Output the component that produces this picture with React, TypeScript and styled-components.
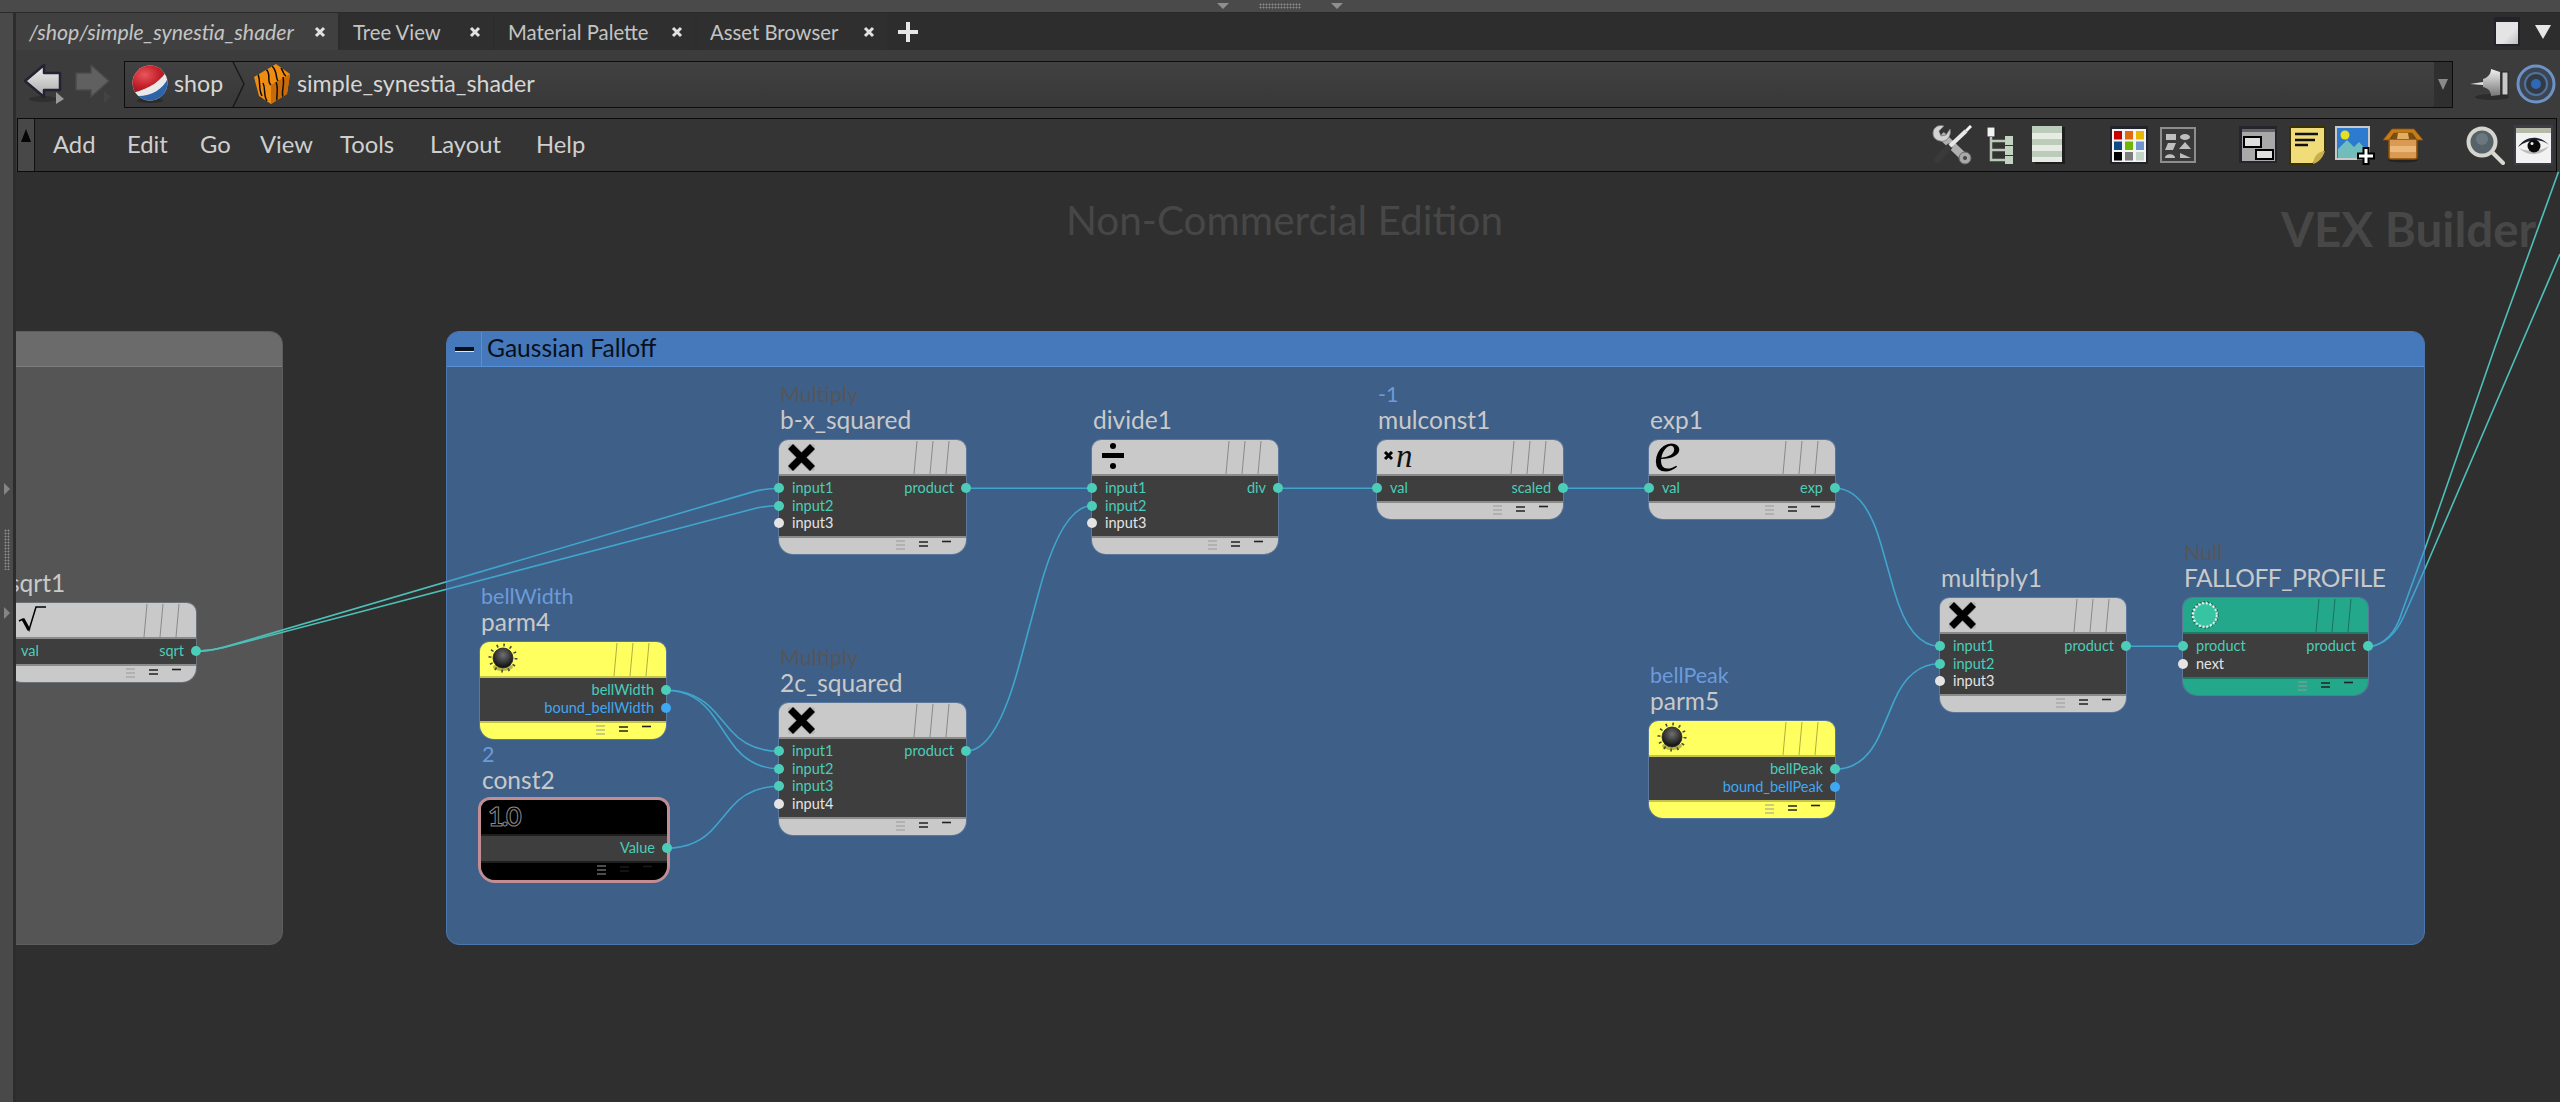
import React from 'react'
import styled, { createGlobalStyle } from 'styled-components'

const UI_FONT = `Lato, 'Noto Sans', sans-serif`
const CANVAS_X = 16
const CANVAS_Y = 172
const ROW_H = 17.5

const GlobalStyle = createGlobalStyle`
  html, body {
    margin: 0;
    padding: 0;
    height: 100%;
    background: #2f2f2f;
    overflow: hidden;
  }
  #root {
    height: 100%;
  }
`

const Shell = styled.div`
  display: flex;
  flex-direction: column;
  width: 2560px;
  height: 1102px;
  font-family: ${UI_FONT};
  background: #3a3a3a;
`

const TopStrip = styled.div`
  flex: none;
  height: 12px;
  display: flex;
  align-items: center;
  justify-content: center;
  gap: 30px;
  background: #4a4a4a;
  border-bottom: 1px solid #2a2a2a;
`

const DownTriangle = styled.div`
  width: 0;
  height: 0;
  border-left: 6px solid transparent;
  border-right: 6px solid transparent;
  border-top: 6px solid #8f8f8f;
`

const GripDots = styled.div<{ $w: number; $h: number; $gap?: number }>`
  width: ${p => p.$w}px;
  height: ${p => p.$h}px;
  margin-top: ${p => p.$gap ?? 0}px;
  background-image: radial-gradient(circle, #8a8a8a 0.9px, transparent 1.1px);
  background-size: 3px 3px;
`

const Body = styled.div`
  flex: 1;
  display: flex;
  min-height: 0;
`

const Gutter = styled.div`
  flex: none;
  width: 13px;
  display: flex;
  flex-direction: column;
  align-items: center;
  padding-top: 470px;
  background: #494949;
  border-right: 3px solid #2c2c2c;
`

const SideTriangle = styled.div<{ $gap: number }>`
  width: 0;
  height: 0;
  margin-top: ${p => p.$gap}px;
  border-top: 6px solid transparent;
  border-bottom: 6px solid transparent;
  border-left: 6px solid #858585;
`

const Main = styled.div`
  flex: 1;
  min-width: 0;
  display: flex;
  flex-direction: column;
`

const TabBar = styled.div`
  flex: none;
  height: 37px;
  display: flex;
  align-items: stretch;
  gap: 2px;
  background: #2d2d2d;
`

const Tab = styled.div<{ $w: number; $active?: boolean }>`
  width: ${p => p.$w}px;
  display: flex;
  align-items: center;
  justify-content: space-between;
  padding: 0 12px 0 13px;
  box-sizing: border-box;
  background: ${p => (p.$active ? '#404040' : '#2f2f2f')};
  color: #c4c4c4;
  font-size: ${p => (p.$active ? 21.3 : 20.3)}px;
  font-style: ${p => (p.$active ? 'italic' : 'normal')};
  white-space: nowrap;
`

const NewTab = styled.div`
  width: 38px;
  display: flex;
  align-items: center;
  justify-content: center;
`

const TabSpacer = styled.div`
  flex: 1;
`

const CornerTools = styled.div`
  display: flex;
  align-items: center;
  gap: 15px;
  padding-right: 9px;
`

const PaneSquare = styled.div`
  width: 22px;
  height: 22px;
  border: 2px solid #23232b;
  border-top-width: 5px;
  background: linear-gradient(135deg, #e4e4e4 60%, #bdbdbd);
`

const CornerTriangle = styled.div`
  width: 0;
  height: 0;
  border-left: 8px solid transparent;
  border-right: 8px solid transparent;
  border-top: 14px solid #e6e6e6;
`

const PathRow = styled.div`
  flex: none;
  height: 68px;
  display: flex;
  align-items: center;
  background: #3c3c3c;
  box-sizing: border-box;
  padding: 0 4px 0 6px;
`

const NavSlot = styled.div<{ $w: number; $gap?: number }>`
  flex: none;
  width: ${p => p.$w}px;
  margin-left: ${p => p.$gap ?? 0}px;
  display: flex;
  align-items: center;
  justify-content: center;
`

const PathField = styled.div`
  flex: 1;
  height: 47px;
  margin-left: 12px;
  display: flex;
  align-items: stretch;
  box-sizing: border-box;
  border: 1px solid #0d0d0d;
  background: linear-gradient(#414141, #383838);
  color: #d6d6d6;
  font-size: 23.2px;
`

const Crumb = styled.div<{ $w?: number }>`
  display: flex;
  align-items: center;
  gap: 6px;
  padding-left: 7px;
  width: ${p => (p.$w ? `${p.$w}px` : 'auto')};
  box-sizing: border-box;
`

const CrumbText = styled.span`
  margin-top: -3px;
`

const CrumbChevron = styled.svg`
  flex: none;
  margin-left: -7px;
`

const PathDrop = styled.div`
  margin-left: auto;
  width: 18px;
  display: flex;
  align-items: center;
  justify-content: center;
  background: #2f2f2f;
`

const PathDropArrow = styled.div`
  width: 0;
  height: 0;
  border-left: 5px solid transparent;
  border-right: 5px solid transparent;
  border-top: 11px solid #8a8a8a;
`

const Toolbar = styled.div`
  flex: none;
  height: 54px;
  margin: 0 3px 0 1px;
  display: flex;
  align-items: center;
  box-sizing: border-box;
  border: 1px solid #0b0b0b;
  background: #343434;
  padding-right: 3px;
`

const Handle = styled.div`
  flex: none;
  align-self: stretch;
  width: 17px;
  display: flex;
  justify-content: center;
  padding-top: 10px;
  box-sizing: border-box;
  background: #484848;
  border-right: 1px solid #111;
`

const HandleArrow = styled.div`
  width: 0;
  height: 0;
  border-left: 5px solid transparent;
  border-right: 5px solid transparent;
  border-bottom: 13px solid #050505;
`

const Menu = styled.div`
  display: flex;
  padding: 0 0 2px 18px;
  color: #cfcfcf;
  font-size: 23.8px;
`

const MenuItem = styled.span<{ $w: number }>`
  width: ${p => p.$w}px;
`

const ToolSlot = styled.div<{ $w: number; $gap: number; $auto?: boolean }>`
  flex: none;
  width: ${p => p.$w}px;
  height: 40px;
  margin-left: ${p => (p.$auto ? 'auto' : `${p.$gap}px`)};
  display: flex;
  align-items: center;
  justify-content: center;
`

const Canvas = styled.div`
  flex: 1;
  position: relative;
  overflow: hidden;
  background: #2f2f2f;
`

const Watermark = styled.div<{ $x: number; $y: number; $size: number; $bold?: boolean }>`
  position: absolute;
  left: ${p => p.$x - CANVAS_X}px;
  top: ${p => p.$y - CANVAS_Y}px;
  font-size: ${p => p.$size}px;
  font-weight: ${p => (p.$bold ? 700 : 400)};
  line-height: 1;
  color: #474747;
  white-space: nowrap;
`

const Group = styled.div<{ $x: number; $y: number; $w: number; $h: number; $bg: string; $line: string }>`
  position: absolute;
  left: ${p => p.$x - CANVAS_X}px;
  top: ${p => p.$y - CANVAS_Y}px;
  width: ${p => p.$w}px;
  height: ${p => p.$h}px;
  display: flex;
  flex-direction: column;
  box-sizing: border-box;
  border-radius: 13px;
  overflow: hidden;
  background: ${p => p.$bg};
  border: 1px solid ${p => p.$line};
`

const GroupHeader = styled.div<{ $bg: string; $line: string }>`
  flex: none;
  height: 35px;
  display: flex;
  align-items: stretch;
  box-sizing: border-box;
  background: ${p => p.$bg};
  border-bottom: 1px solid ${p => p.$line};
`

const Collapse = styled.div`
  flex: none;
  width: 35px;
  display: flex;
  align-items: center;
  justify-content: center;
  box-sizing: border-box;
  border-right: 1px solid #5b8ecb;
`

const CollapseBar = styled.div`
  width: 19px;
  height: 4px;
  background: #0a0f18;
  border-bottom: 1px solid #dfe6ef;
`

const GroupTitle = styled.div`
  padding: 0 0 3px 5px;
  display: flex;
  align-items: center;
  color: #07101d;
  font-size: 24.6px;
`

const WireLayer = styled.svg`
  position: absolute;
  left: 0;
  top: 0;
`

const toneFill = { gray: '#c9c9c9', yellow: '#ffff60', green: '#23a88b', black: '#000000' }
const toneLine = { gray: '#8b8b8b', yellow: '#c4c44c', green: '#1c7c68', black: '#1e1e1e' }
type Tone = keyof typeof toneFill

const NodeBox = styled.div<{ $x: number; $y: number; $w: number; $tone: Tone }>`
  position: absolute;
  left: ${p => p.$x - CANVAS_X}px;
  top: ${p => p.$y - CANVAS_Y}px;
  width: ${p => p.$w}px;
  display: flex;
  flex-direction: column;
  border-radius: 9px 9px 14px 14px;
  box-shadow: ${p => (p.$tone === 'black' ? '0 0 0 3px #c28e93' : '0 0 0 1px rgba(150, 165, 185, 0.35)')};
`

const Caption = styled.div`
  position: absolute;
  left: 1px;
  bottom: 100%;
  margin-bottom: 7px;
  display: flex;
  flex-direction: column;
  white-space: nowrap;
`

const SubLabel = styled.div<{ $param?: boolean }>`
  font-size: 21.5px;
  line-height: 25px;
  color: ${p => (p.$param ? '#6c9bdb' : '#55565a')};
`

const NameLabel = styled.div<{ $tight?: boolean }>`
  font-size: 24.5px;
  line-height: 26px;
  letter-spacing: ${p => (p.$tight ? '-0.5px' : '0')};
  color: #c9c9c9;
`

const NodeHeader = styled.div<{ $tone: Tone }>`
  flex: none;
  height: 36px;
  position: relative;
  display: flex;
  align-items: center;
  padding-left: 9px;
  box-sizing: border-box;
  border-radius: 9px 9px 0 0;
  background: ${p => toneFill[p.$tone]};
  border-bottom: 2px solid ${p => toneLine[p.$tone]};
`

const Slashes = styled.svg`
  position: absolute;
  right: 11px;
  top: 1px;
`

const NodeBody = styled.div`
  flex: none;
  display: flex;
  flex-direction: column;
  padding: 3.5px 0 4px;
  background: #3e3e3e;
`

const PortRow = styled.div`
  position: relative;
  height: ${ROW_H}px;
  display: flex;
  justify-content: space-between;
  align-items: center;
  padding: 0 12px 0 13px;
`

const portColor = { teal: '#4ccdb9', white: '#e4e4e4', blue: '#3fa8f2' }
type PortTone = keyof typeof portColor

const PortLabel = styled.span<{ $tone: PortTone }>`
  font-size: 14.5px;
  line-height: 1;
  color: ${p => portColor[p.$tone]};
  white-space: nowrap;
`

const PortDot = styled.span<{ $tone: PortTone; $side: 'left' | 'right' }>`
  position: absolute;
  ${p => p.$side}: -5px;
  top: 50%;
  width: 10px;
  height: 10px;
  margin-top: -5px;
  border-radius: 50%;
  background: ${p => portColor[p.$tone]};
`

const NodeFooter = styled.div<{ $tone: Tone; $h: number }>`
  flex: none;
  height: ${p => p.$h}px;
  position: relative;
  box-sizing: border-box;
  border-radius: 0 0 14px 14px;
  background: ${p => toneFill[p.$tone]};
  border-top: 2px solid ${p => toneLine[p.$tone]};
`

const FooterMarks = styled.svg`
  position: absolute;
  right: 14px;
  top: 2px;
`

const EGlyph = styled.span`
  font-family: 'Liberation Serif', serif;
  font-style: italic;
  font-size: 60px;
  line-height: 33px;
  height: 33px;
  margin-left: -4px;
  color: #000;
  position: relative;
  top: -6px;
`

const ScaleIcon = styled.div`
  display: flex;
  align-items: center;
  gap: 2px;
  margin-left: -3px;
  margin-top: -3px;
`

const ScaleLetter = styled.span`
  font-family: 'Liberation Serif', serif;
  font-style: italic;
  font-size: 33px;
  line-height: 30px;
  color: #111;
`

const ConstGlyph = styled.span`
  font-size: 27px;
  font-weight: 700;
  letter-spacing: -2px;
  color: #000;
  -webkit-text-stroke: 1px #8a8a8a;
  margin-left: -2px;
  margin-top: -4px;
`

const IconShift = styled.div<{ $x?: number; $y?: number }>`
  display: flex;
  margin-left: ${p => p.$x ?? 0}px;
  margin-top: ${p => p.$y ?? 0}px;
`

/* ---------- icons ---------- */

const CrossIcon = () => (
  <svg width="27" height="27" viewBox="0 0 27 27">
    <path d="M4 4 L23 23 M23 4 L4 23" stroke="#b5b5b5" strokeWidth="9" strokeLinecap="round" />
    <path d="M5 5 L22 22 M22 5 L5 22" stroke="#000" strokeWidth="7" strokeLinecap="square" />
  </svg>
)

const DivideIcon = () => (
  <IconShift $y={-2}>
    <svg width="26" height="30" viewBox="0 0 26 30">
      <rect x="1" y="12" width="22" height="5" fill="#000" />
      <circle cx="12" cy="5" r="3" fill="#000" />
      <circle cx="12" cy="25" r="3" fill="#000" />
    </svg>
  </IconShift>
)

const RootIcon = () => (
  <IconShift $y={-2}>
    <svg width="30" height="28" viewBox="0 0 30 28">
      <path d="M2 16 L6 14 L12 25 L19 2 L29 2" fill="none" stroke="#000" strokeWidth="1.5" />
      <path d="M6 14 L12 25" stroke="#000" strokeWidth="3.2" />
    </svg>
  </IconShift>
)

const KnobIcon = () => (
  <IconShift $x={-1} $y={-2}>
    <svg width="30" height="30" viewBox="0 0 30 30">
      <defs>
        <radialGradient id="knobFill" cx="50%" cy="35%" r="65%">
          <stop offset="0%" stopColor="#707070" />
          <stop offset="70%" stopColor="#2a2a2a" />
          <stop offset="100%" stopColor="#0c0c0c" />
        </radialGradient>
      </defs>
      <ellipse cx="15" cy="24" rx="10" ry="4" fill="#b9b942" />
      <circle cx="15" cy="15" r="13" fill="none" stroke="#4a4a3a" strokeWidth="3" strokeDasharray="1.6 5.2" />
      <circle cx="15" cy="15" r="10" fill="url(#knobFill)" stroke="#222" strokeWidth="0.8" />
    </svg>
  </IconShift>
)

const NullIcon = () => (
  <IconShift $x={-1}>
    <svg width="28" height="28" viewBox="0 0 28 28">
      <circle cx="14" cy="14" r="12" fill="#36c4a2" stroke="#e3ede9" strokeWidth="2.5" strokeDasharray="2.2 1.6" />
      <circle cx="14" cy="14" r="13.2" fill="none" stroke="#11332b" strokeWidth="0.8" strokeDasharray="2 2" />
    </svg>
  </IconShift>
)

const MiniCross = () => (
  <svg width="11" height="11" viewBox="0 0 11 11">
    <path d="M2 2 L9 9 M9 2 L2 9" stroke="#000" strokeWidth="3" />
  </svg>
)

const CloseX = () => (
  <svg width="12" height="12" viewBox="0 0 12 12">
    <path d="M2 2 L10 10 M10 2 L2 10" stroke="#e2e2e2" strokeWidth="3" />
  </svg>
)

const PlusIcon = () => (
  <svg width="20" height="20" viewBox="0 0 20 20">
    <path d="M10 0 V20 M0 10 H20" stroke="#e6e6e6" strokeWidth="4" />
  </svg>
)

const BackArrow = () => (
  <svg width="42" height="42" viewBox="0 0 42 42">
    <defs>
      <linearGradient id="backFill" x1="0" y1="0" x2="0" y2="1">
        <stop offset="0%" stopColor="#f2f2f2" />
        <stop offset="100%" stopColor="#a9a9a9" />
      </linearGradient>
    </defs>
    <ellipse cx="20" cy="36" rx="14" ry="3" fill="#2f2f2f" />
    <path d="M2 18 L21 2 V10 H37 V27 H21 V34 Z" fill="url(#backFill)" stroke="#232333" strokeWidth="2.5" strokeLinejoin="round" />
    <path d="M33 29 L41 36 L33 41 Z" fill="#9a9a9a" />
  </svg>
)

const ForwardArrow = () => (
  <svg width="38" height="42" viewBox="0 0 38 42">
    <path d="M35 18 L17 2 V10 H2 V27 H17 V34 Z" fill="#606060" stroke="#4a4a4a" strokeWidth="1.5" strokeLinejoin="round" />
    <path d="M30 28 L37 34 L30 40 Z" fill="#434343" />
  </svg>
)

const PepsiIcon = () => (
  <svg width="36" height="38" viewBox="0 0 36 38">
    <defs>
      <clipPath id="pepsiClip">
        <circle cx="18" cy="18" r="17.5" />
      </clipPath>
      <radialGradient id="pepsiRed" cx="35%" cy="35%" r="70%">
        <stop offset="0%" stopColor="#e8565b" />
        <stop offset="60%" stopColor="#c41f2a" />
        <stop offset="100%" stopColor="#8f1a20" />
      </radialGradient>
    </defs>
    <ellipse cx="18" cy="35.5" rx="13" ry="2.5" fill="#2a2a2a" />
    <g clipPath="url(#pepsiClip)">
      <rect width="36" height="36" fill="#e9e9e9" />
      <path d="M0 0 H36 V4 C30 15 18 24 0 28 Z" fill="url(#pepsiRed)" />
      <path d="M36 13 C31 24 20 31 6 31 V36 H36 Z" fill="#2d63a8" />
    </g>
  </svg>
)

const TigerIcon = () => (
  <svg width="38" height="42" viewBox="0 0 38 42">
    <defs>
      <clipPath id="tigerClip">
        <path d="M1 14 L23 1 L37 11 L34 31 L18 41 L6 33 Z" />
      </clipPath>
    </defs>
    <path d="M1 14 L23 1 L37 11 L34 31 L18 41 L6 33 Z" fill="#f08c10" />
    <path d="M18 22 L37 11 L34 31 L18 41 Z" fill="#c96a08" />
    <g clipPath="url(#tigerClip)" fill="none" stroke="#0c0c0c" strokeWidth="1.5">
      <path d="M5 11 C8 19 5 25 9 33" />
      <path d="M10 20 C13 26 10 32 14 38" />
      <path d="M13 6 C19 12 13 18 18 22" />
      <path d="M19 3 C25 9 22 14 25 18" />
      <path d="M23 19 C26 26 23 32 24 38" />
      <path d="M30 14 C32 22 28 28 30 34" />
      <path d="M28 5 C31 9 30 12 33 13" />
    </g>
  </svg>
)

const PinIcon = () => (
  <svg width="40" height="38" viewBox="0 0 40 38">
    <defs>
      <linearGradient id="pinFill" x1="0" y1="0" x2="0" y2="1">
        <stop offset="0%" stopColor="#f0f0f0" />
        <stop offset="100%" stopColor="#777" />
      </linearGradient>
    </defs>
    <ellipse cx="22" cy="32" rx="17" ry="3" fill="#2c2c2c" />
    <path d="M0 19 L13 17 V20 Z" fill="#e5e5e5" />
    <path d="M13 14 C19 12 21 8 21 4 L30 7 V30 L21 31 C21 26 18 23 13 22 Z" fill="url(#pinFill)" />
    <rect x="32" y="7" width="6" height="23" fill="#c8c8c8" stroke="#222" strokeWidth="1" />
  </svg>
)

const TargetIcon = () => (
  <svg width="40" height="40" viewBox="0 0 40 40">
    <circle cx="20" cy="20" r="18" fill="#3b4652" stroke="#6d93c6" strokeWidth="3" />
    <circle cx="20" cy="20" r="11" fill="#323a45" stroke="#54739c" strokeWidth="2" />
    <circle cx="20" cy="20" r="5" fill="#2f68b4" />
  </svg>
)

const WrenchIcon = () => (
  <svg width="40" height="40" viewBox="0 0 40 40">
    <path d="M9 10 L33 33" stroke="#b0b0b0" strokeWidth="8" />
    <path d="M1 8 C1 3 6 -1 12 1 L7 6 L9 11 L14 10 L18 4 C20 11 14 18 8 16 C3 15 1 12 1 8 Z" fill="#d2d2d2" stroke="#777" strokeWidth="0.8" />
    <circle cx="33" cy="33" r="6" fill="#a8a8a8" stroke="#666" />
    <circle cx="33" cy="33" r="2" fill="#444" />
    <path d="M5 35 L17 22" stroke="#3a3a3a" strokeWidth="6.5" strokeLinecap="round" />
    <path d="M18 21 L34 6" stroke="#e8e8e8" strokeWidth="4" />
    <path d="M34 6 L39 1" stroke="#f5f5f5" strokeWidth="3" />
  </svg>
)

const TreeIcon = () => (
  <svg width="27" height="37" viewBox="0 0 27 37">
    <rect x="0" y="0" width="8" height="10" fill="#f2f2f2" stroke="#222" strokeWidth="1" />
    <path d="M4 10 V33 H19 M4 23 H19 M4 14 H19" stroke="#b9c9b7" strokeWidth="2.5" fill="none" />
    <rect x="18" y="9" width="8" height="9" fill="#c3d3c1" />
    <rect x="18" y="19" width="8" height="9" fill="#c3d3c1" />
    <rect x="18" y="29" width="8" height="8" fill="#c3d3c1" />
  </svg>
)

const StripesIcon = () => (
  <svg width="33" height="38" viewBox="0 0 33 38">
    <rect x="3" y="1" width="30" height="37" fill="#1e1e1e" />
    <rect x="0" y="0" width="30" height="36" fill="#e6ece4" />
    <rect x="0" y="0" width="30" height="7" fill="#bcccba" />
    <rect x="0" y="13" width="30" height="6" fill="#bcccba" />
    <rect x="0" y="25" width="30" height="6" fill="#bcccba" />
  </svg>
)

const PaletteIcon = () => {
  const colors = ['#c40000', '#e06a10', '#e8b800', '#104a86', '#6cb800', '#6e96cc', '#000000', '#7c7c7c', '#c4d4c8']
  return (
    <svg width="38" height="38" viewBox="0 0 38 38">
      <rect width="38" height="38" fill="#23232e" />
      <rect x="2" y="3" width="34" height="33" fill="#f4f4f4" />
      {colors.map((c, i) => (
        <rect key={c} x={4 + (i % 3) * 11} y={5 + Math.floor(i / 3) * 10.5} width="8" height="8.5" fill={c} />
      ))}
    </svg>
  )
}

const ShapesIcon = () => (
  <svg width="36" height="36" viewBox="0 0 36 36">
    <rect x="1" y="1" width="34" height="34" fill="#3a3a3a" stroke="#8d8d8d" strokeWidth="2" />
    <rect x="6" y="7" width="10" height="6" fill="#bfbfbf" />
    <ellipse cx="25" cy="10" rx="5" ry="3" fill="#bfbfbf" />
    <path d="M8 16 H16 L13 23 H5 Z" fill="#bfbfbf" />
    <path d="M25 15 L31 22 H19 Z" fill="#bfbfbf" />
    <path d="M5 31 C5 26 15 26 15 31 Z" fill="#bfbfbf" />
    <path d="M20 26 L31 31 H20 Z" fill="#bfbfbf" />
  </svg>
)

const NetIcon = () => (
  <svg width="41" height="39" viewBox="0 0 41 39">
    <rect width="38" height="37" fill="#25252e" />
    <rect x="3" y="3" width="33" height="32" fill="#a9a9a9" />
    <rect x="3" y="3" width="33" height="3" fill="#666" />
    <rect x="5" y="11" width="17" height="10" fill="#e0e0e0" stroke="#000" strokeWidth="2" />
    <rect x="17" y="24" width="17" height="9" fill="#e0e0e0" stroke="#000" strokeWidth="2" />
  </svg>
)

const StickyIcon = () => (
  <svg width="37" height="39" viewBox="0 0 37 39">
    <path d="M1 1 H36 V25 L24 38 H1 Z" fill="#f0dc78" stroke="#3a3200" strokeWidth="2" />
    <path d="M24 38 C25 30 28 26 36 25 C33 33 30 36 24 38 Z" fill="#c8b050" />
    <path d="M6 8 H29 M6 14 H26 M6 19 H19" stroke="#111" strokeWidth="2.5" />
  </svg>
)

const ImageIcon = () => (
  <svg width="41" height="40" viewBox="0 0 41 40">
    <rect x="0" y="1" width="35" height="34" fill="#c8c8c8" />
    <rect x="2" y="3" width="31" height="30" fill="#2c7bd0" />
    <circle cx="10" cy="10" r="4.5" fill="#e5e020" />
    <path d="M3 33 V24 L12 15 L19 22 L24 17 L33 27 V33 Z" fill="#71bdbc" />
    <path d="M31 22 V40 M22 31 H40" stroke="#000" strokeWidth="7" />
    <path d="M31 24 V38 M24 31 H38" stroke="#fff" strokeWidth="3" />
  </svg>
)

const BoxIcon = () => (
  <svg width="40" height="36" viewBox="0 0 40 36">
    <ellipse cx="20" cy="33" rx="15" ry="2.5" fill="#232323" />
    <path d="M6 12 H34 V30 Q34 32 32 32 H8 Q6 32 6 30 Z" fill="#d99a55" stroke="#8a5208" strokeWidth="1.5" />
    <rect x="7" y="19" width="26" height="6" fill="#ebb878" />
    <path d="M0 13 L9 2 H31 L40 13 H34 L29 6 H11 L6 13 Z" fill="#c77c1a" stroke="#8a5208" strokeWidth="0.8" />
    <path d="M11 6 H29 L32 12 H8 Z" fill="#7a4d12" />
    <path d="M15 6 H25 L26 12 H14 Z" fill="#e0b060" />
  </svg>
)

const MagnifierIcon = () => (
  <svg width="39" height="39" viewBox="0 0 39 39">
    <path d="M24 24 L37 37" stroke="#d8d8d0" strokeWidth="4" strokeLinecap="round" />
    <circle cx="16" cy="16" r="13.5" fill="#566269" stroke="#d5d5cd" strokeWidth="4" />
    <circle cx="16" cy="13" r="6" fill="#6c787f" />
  </svg>
)

const EyeIcon = () => (
  <svg width="39" height="40" viewBox="0 0 39 40">
    <rect width="39" height="40" fill="#3c3c46" />
    <rect x="2" y="3" width="35" height="35" fill="#f2f2f2" />
    <rect x="2" y="3" width="35" height="5" fill="#b5baa8" />
    <path d="M4 22 C12 10 26 10 35 20 C27 13 14 14 4 22 Z" fill="#1e1e2e" />
    <path d="M5 23 C13 31 27 32 35 21 C30 25 14 28 5 23 Z" fill="#bcbcbc" />
    <circle cx="20" cy="21" r="6.5" fill="#0a0a0a" />
    <circle cx="18" cy="18.5" r="1.5" fill="#eee" />
  </svg>
)

/* ---------- graph data ---------- */

type PortDef = { label: string; tone: PortTone }
type NodeDef = {
  id: string
  x: number
  y: number
  w: number
  tone: Tone
  name: string
  sub?: string
  param?: boolean
  tight?: boolean
  icon: React.ReactNode
  inputs: PortDef[]
  outputs: PortDef[]
  footer?: number
}

const teal = (label: string): PortDef => ({ label, tone: 'teal' })
const white = (label: string): PortDef => ({ label, tone: 'white' })
const blue = (label: string): PortDef => ({ label, tone: 'blue' })

const MENU_ITEMS: [string, number][] = [
  ['Add', 74],
  ['Edit', 73],
  ['Go', 60],
  ['View', 80],
  ['Tools', 90],
  ['Layout', 106],
  ['Help', 60],
]

const NODES: NodeDef[] = [
  {
    id: 'sqrt', x: 8, y: 603, w: 188, tone: 'gray', name: 'sqrt1', icon: <RootIcon />,
    inputs: [teal('val')], outputs: [teal('sqrt')],
  },
  {
    id: 'bx', x: 779, y: 440, w: 187, tone: 'gray', name: 'b-x_squared', sub: 'Multiply', icon: <CrossIcon />,
    inputs: [teal('input1'), teal('input2'), white('input3')], outputs: [teal('product')],
  },
  {
    id: 'c2', x: 779, y: 703, w: 187, tone: 'gray', name: '2c_squared', sub: 'Multiply', icon: <CrossIcon />,
    inputs: [teal('input1'), teal('input2'), teal('input3'), white('input4')], outputs: [teal('product')],
  },
  {
    id: 'divide', x: 1092, y: 440, w: 186, tone: 'gray', name: 'divide1', icon: <DivideIcon />,
    inputs: [teal('input1'), teal('input2'), white('input3')], outputs: [teal('div')],
  },
  {
    id: 'mul', x: 1377, y: 440, w: 186, tone: 'gray', name: 'mulconst1', sub: '-1', param: true,
    icon: <ScaleIcon><MiniCross /><ScaleLetter>n</ScaleLetter></ScaleIcon>,
    inputs: [teal('val')], outputs: [teal('scaled')],
  },
  {
    id: 'exp', x: 1649, y: 440, w: 186, tone: 'gray', name: 'exp1',
    icon: <EGlyph>e</EGlyph>,
    inputs: [teal('val')], outputs: [teal('exp')],
  },
  {
    id: 'parm4', x: 480, y: 642, w: 186, tone: 'yellow', name: 'parm4', sub: 'bellWidth', param: true, icon: <KnobIcon />,
    inputs: [], outputs: [teal('bellWidth'), blue('bound_bellWidth')],
  },
  {
    id: 'const2', x: 481, y: 800, w: 186, tone: 'black', name: 'const2', sub: '2', param: true, footer: 19,
    icon: <ConstGlyph>1.0</ConstGlyph>,
    inputs: [], outputs: [teal('Value')],
  },
  {
    id: 'parm5', x: 1649, y: 721, w: 186, tone: 'yellow', name: 'parm5', sub: 'bellPeak', param: true, icon: <KnobIcon />,
    inputs: [], outputs: [teal('bellPeak'), blue('bound_bellPeak')],
  },
  {
    id: 'multiply', x: 1940, y: 598, w: 186, tone: 'gray', name: 'multiply1', icon: <CrossIcon />,
    inputs: [teal('input1'), teal('input2'), white('input3')], outputs: [teal('product')],
  },
  {
    id: 'falloff', x: 2183, y: 598, w: 185, tone: 'green', name: 'FALLOFF_PROFILE', sub: 'Null', tight: true, icon: <NullIcon />,
    inputs: [teal('product'), white('next')], outputs: [teal('product')],
  },
]

const WIRES: [string, number, string, number, number][] = [
  ['sqrt', 0, 'bx', 0, 14],
  ['sqrt', 0, 'bx', 1, 14],
  ['bx', 0, 'divide', 0, 20],
  ['c2', 0, 'divide', 1, 30],
  ['divide', 0, 'mul', 0, 20],
  ['mul', 0, 'exp', 0, 20],
  ['exp', 0, 'multiply', 0, 30],
  ['parm5', 0, 'multiply', 1, 30],
  ['multiply', 0, 'falloff', 0, 20],
  ['parm4', 0, 'c2', 0, 30],
  ['parm4', 0, 'c2', 1, 30],
  ['const2', 0, 'c2', 2, 30],
]

const OFFSCREEN_WIRES = [
  'M2368 647 C2385 645 2396 632 2402 612 L2427 543 L2495 347 L2570 140',
  'M2368 647 C2385 645 2396 634 2404 616 L2427 564 L2560 254',
]

function portY(node: NodeDef, index: number) {
  return node.y + 36 + 3.5 + ROW_H * (index + 0.5)
}

function wirePath(fromId: string, out: number, toId: string, input: number, bend: number) {
  const from = NODES.find(n => n.id === fromId)!
  const to = NODES.find(n => n.id === toId)!
  const x1 = from.x + from.w
  const y1 = portY(from, out)
  const x2 = to.x
  const y2 = portY(to, input)
  const ax = x1 + bend
  const bx = x2 - bend
  const t = Math.min(0.35, bend / Math.max(1, bx - ax))
  const px = ax + (bx - ax) * t
  const py = y1 + (y2 - y1) * t
  const qx = bx - (bx - ax) * t
  const qy = y2 - (y2 - y1) * t
  return `M${x1} ${y1} Q${ax} ${y1} ${px} ${py} L${qx} ${qy} Q${bx} ${y2} ${x2} ${y2}`
}

function GraphNode({ node }: { node: NodeDef }) {
  const rowCount = Math.max(node.inputs.length, node.outputs.length)
  const rows = Array.from({ length: rowCount }, (_, i) => i)
  const slashStroke = node.tone === 'black' ? 'none' : 'rgba(0, 0, 0, 0.32)'
  const darkMark = node.tone === 'black' ? '#1a1a1a' : '#222'
  return (
    <NodeBox $x={node.x} $y={node.y} $w={node.w} $tone={node.tone}>
      <Caption>
        {node.sub && <SubLabel $param={node.param}>{node.sub}</SubLabel>}
        <NameLabel $tight={node.tight}>{node.name}</NameLabel>
      </Caption>
      <NodeHeader $tone={node.tone}>
        {node.icon}
        <Slashes width="42" height="33" viewBox="0 0 42 33">
          <path d="M1 33 L4 0 M17 33 L20 0 M33 33 L36 0" stroke={slashStroke} strokeWidth="1" />
        </Slashes>
      </NodeHeader>
      <NodeBody>
        {rows.map(i => (
          <PortRow key={i}>
            {node.inputs[i] ? <PortLabel $tone={node.inputs[i].tone}>{node.inputs[i].label}</PortLabel> : <span />}
            {node.outputs[i] ? <PortLabel $tone={node.outputs[i].tone}>{node.outputs[i].label}</PortLabel> : <span />}
            {node.inputs[i] && <PortDot $side="left" $tone={node.inputs[i].tone} />}
            {node.outputs[i] && <PortDot $side="right" $tone={node.outputs[i].tone} />}
          </PortRow>
        ))}
      </NodeBody>
      <NodeFooter $tone={node.tone} $h={node.footer ?? 18}>
        <FooterMarks width="56" height="11" viewBox="0 0 56 11">
          <path d="M0 1 H9 M0 5 H9 M0 9 H9" stroke="#9a9a9a" strokeWidth="1.2" />
          <path d="M23 2 H32 M23 6 H32" stroke={darkMark} strokeWidth="1.4" />
          <path d="M46 1.5 H55" stroke={darkMark} strokeWidth="1.6" />
        </FooterMarks>
      </NodeFooter>
    </NodeBox>
  )
}

export default function App() {
  return (
    <>
      <GlobalStyle />
      <Shell>
        <TopStrip>
          <DownTriangle />
          <GripDots $w={42} $h={6} />
          <DownTriangle />
        </TopStrip>
        <Body>
          <Gutter>
            <SideTriangle $gap={0} />
            <GripDots $w={6} $h={41} $gap={34} />
            <SideTriangle $gap={37} />
          </Gutter>
          <Main>
            <TabBar>
              <Tab $w={322} $active>/shop/simple_synestia_shader<CloseX /></Tab>
              <Tab $w={153}>Tree View<CloseX /></Tab>
              <Tab $w={200}>Material Palette<CloseX /></Tab>
              <Tab $w={190}>Asset Browser<CloseX /></Tab>
              <NewTab><PlusIcon /></NewTab>
              <TabSpacer />
              <CornerTools>
                <PaneSquare />
                <CornerTriangle />
              </CornerTools>
            </TabBar>
            <PathRow>
              <NavSlot $w={44}><BackArrow /></NavSlot>
              <NavSlot $w={38} $gap={8}><ForwardArrow /></NavSlot>
              <PathField>
                <Crumb $w={114}><PepsiIcon /><CrumbText>shop</CrumbText></Crumb>
                <CrumbChevron width="14" height="45" viewBox="0 0 14 45">
                  <path d="M1 0 L12 22 L1 45" fill="none" stroke="#1a1a1a" strokeWidth="1.5" />
                </CrumbChevron>
                <Crumb><TigerIcon /><CrumbText>simple_synestia_shader</CrumbText></Crumb>
                <PathDrop><PathDropArrow /></PathDrop>
              </PathField>
              <NavSlot $w={40} $gap={17}><PinIcon /></NavSlot>
              <NavSlot $w={40} $gap={6}><TargetIcon /></NavSlot>
            </PathRow>
            <Toolbar>
              <Handle><HandleArrow /></Handle>
              <Menu>
                {MENU_ITEMS.map(([label, width]) => (
                  <MenuItem key={label} $w={width}>{label}</MenuItem>
                ))}
              </Menu>
              <ToolSlot $w={40} $gap={0} $auto><WrenchIcon /></ToolSlot>
              <ToolSlot $w={27} $gap={15}><TreeIcon /></ToolSlot>
              <ToolSlot $w={33} $gap={18}><StripesIcon /></ToolSlot>
              <ToolSlot $w={38} $gap={45}><PaletteIcon /></ToolSlot>
              <ToolSlot $w={36} $gap={12}><ShapesIcon /></ToolSlot>
              <ToolSlot $w={41} $gap={43}><NetIcon /></ToolSlot>
              <ToolSlot $w={37} $gap={9}><StickyIcon /></ToolSlot>
              <ToolSlot $w={41} $gap={9}><ImageIcon /></ToolSlot>
              <ToolSlot $w={40} $gap={7}><BoxIcon /></ToolSlot>
              <ToolSlot $w={39} $gap={43}><MagnifierIcon /></ToolSlot>
              <ToolSlot $w={39} $gap={9}><EyeIcon /></ToolSlot>
            </Toolbar>
            <Canvas>
              <Watermark $x={1066} $y={200} $size={40.5}>Non-Commercial Edition</Watermark>
              <Watermark $x={2281} $y={205} $size={47.5} $bold>VEX Builder</Watermark>
              <Group $x={-40} $y={331} $w={323} $h={614} $bg="#555555" $line="#5d5d5d">
                <GroupHeader $bg="#6b6b6b" $line="#7d7d7d" />
              </Group>
              <Group $x={446} $y={331} $w={1979} $h={614} $bg="#3e5f87" $line="#4a78ad">
                <GroupHeader $bg="#4679bb" $line="#5a90d5">
                  <Collapse><CollapseBar /></Collapse>
                  <GroupTitle>Gaussian Falloff</GroupTitle>
                </GroupHeader>
              </Group>
              <WireLayer width="2544" height="930" viewBox={`${CANVAS_X} ${CANVAS_Y} 2544 930`} fill="none">
                <defs>
                  <linearGradient id="wireTint" gradientUnits="userSpaceOnUse" x1="0" y1="0" x2="2560" y2="0">
                    <stop offset={446 / 2560} stopColor="#4cc0b8" />
                    <stop offset={446 / 2560} stopColor="#3fa5cc" />
                    <stop offset={2425 / 2560} stopColor="#3fa5cc" />
                    <stop offset={2425 / 2560} stopColor="#4cc0b8" />
                  </linearGradient>
                </defs>
                {WIRES.map(([a, o, b, i, bend]) => (
                  <path key={`${a}-${b}-${i}`} d={wirePath(a, o, b, i, bend)} stroke="url(#wireTint)" strokeWidth="1.6" />
                ))}
                {OFFSCREEN_WIRES.map(d => (
                  <path key={d} d={d} stroke="url(#wireTint)" strokeWidth="1.6" />
                ))}
              </WireLayer>
              {NODES.map(n => (
                <GraphNode key={n.id} node={n} />
              ))}
            </Canvas>
          </Main>
        </Body>
      </Shell>
    </>
  )
}
